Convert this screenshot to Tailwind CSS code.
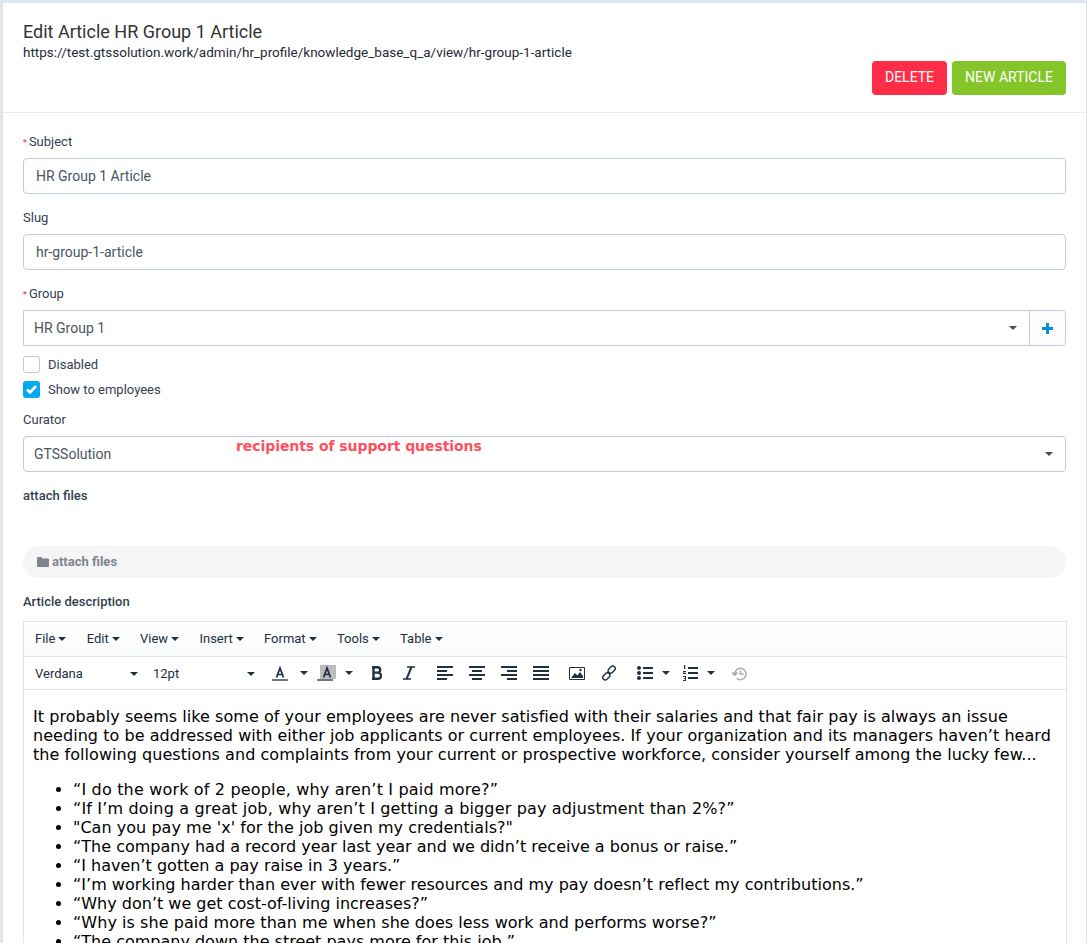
<!DOCTYPE html>
<html lang="en">
<head>
    <meta charset="UTF-8">
    <meta name="viewport" content="width=device-width, initial-scale=1.0">
    <title>Edit Article</title>
    <script src="https://cdn.jsdelivr.net/npm/@tailwindcss/browser@4"></script>
</head>
<body class="bg-[#dfe6f0] h-[943px] overflow-hidden font-['Roboto',sans-serif] text-[13px] text-[#333f50]">
    <div class="ml-[3px] mr-px mt-[3px] h-[940px] bg-white overflow-hidden">
        <!-- header -->
        <div class="h-[109px] border-b border-[#e8ecf1] box-content flex justify-between pl-5 pr-5">
            <div class="pt-[17px]">
                <h1 class="text-[18px] leading-[24px] text-[#333]">Edit Article HR Group 1 Article</h1>
                <a class="block text-[13.5px] leading-[17px] text-[#1f2a37]">https://test.gtssolution.work/admin/hr_profile/knowledge_base_q_a/view/hr-group-1-article</a>
            </div>
            <div class="flex gap-[5px] pt-[58px]">
                <button class="h-[34px] w-[75px] pb-px rounded bg-[#ff2d47] text-white text-[14px]">DELETE</button>
                <button class="h-[34px] w-[114px] pb-px rounded bg-[#84c529] text-white text-[14px]">NEW ARTICLE</button>
            </div>
        </div>

        <!-- form -->
        <div class="px-5 pt-[20px] w-[1083px]">
            <label class="block h-[18px] leading-[18px]"><span class="text-[#ff2d47] text-[9px] mr-[2px]">*</span>Subject</label>
            <div class="mt-[7px] h-[36px] w-[1043px] border border-[#bfcbd9] rounded flex items-center px-3 pt-px text-[14px] text-[#4b5563]">HR Group 1 Article</div>

            <label class="block mt-[15px] h-[18px] leading-[18px]">Slug</label>
            <div class="mt-[7px] h-[36px] w-[1043px] border border-[#bfcbd9] rounded flex items-center px-3 pt-px text-[14px] text-[#4b5563]">hr-group-1-article</div>

            <label class="block mt-[15px] h-[18px] leading-[18px]"><span class="text-[#ff2d47] text-[9px] mr-[2px]">*</span>Group</label>
            <div class="mt-[7px] h-[36px] w-[1043px] border border-[#bfcbd9] rounded-r flex items-center text-[14px] text-[#4b5563]">
                <span class="flex-1 pl-[10px] pt-px">HR Group 1</span>
                <svg class="w-[8px] h-[4px] mr-[12px] fill-[#3f4a5a]" viewBox="0 0 8 4"><path d="M0 0h8L4 4z"/></svg>
                <div class="w-[36px] h-full border-l border-[#bfcbd9] bg-[#fbfcfe] flex items-center justify-center rounded-r">
                    <svg class="w-[11px] h-[11px] fill-[#0a8fd6]" viewBox="0 0 11 11"><path d="M4 0h3v4h4v3H7v4H4V7H0V4h4z"/></svg>
                </div>
            </div>

            <div class="mt-[10px] flex items-center h-[17px] gap-[8px]">
                <span class="w-[17px] h-[17px] border border-[#bfcbd9] rounded-[3px] bg-white"></span>
                <span>Disabled</span>
            </div>
            <div class="mt-[8px] flex items-center h-[17px] gap-[8px]">
                <span class="w-[17px] h-[17px] rounded-[3px] bg-[#03a9f4] flex items-center justify-center">
                    <svg class="w-[11px] h-[9px]" viewBox="0 0 11 9" fill="none" stroke="#fff" stroke-width="2.6"><path d="M1 4.5l3 3L10 1"/></svg>
                </span>
                <span>Show to employees</span>
            </div>

            <label class="block mt-[13px] h-[18px] leading-[18px]">Curator</label>
            <div class="relative mt-[7px] h-[36px] w-[1043px] border border-[#bfcbd9] rounded flex items-center text-[14px] text-[#4b5563]">
                <span class="flex-1 pl-[10px] pt-px">GTSSolution</span>
                <svg class="w-[8px] h-[4px] mr-[12px] fill-[#3f4a5a]" viewBox="0 0 8 4"><path d="M0 0h8L4 4z"/></svg>
                <span class="absolute left-[212px] top-0 h-[18px] leading-[18px] font-['DejaVu_Sans',sans-serif] text-[14px] font-bold tracking-[-0.07px] text-[#ff4f5e] whitespace-nowrap">recipients of support questions</span>
            </div>

            <label class="block mt-[15px] h-[18px] leading-[18px] font-medium">attach files</label>
            <div class="mt-[41px] h-[32px] w-[1043px] rounded-full bg-[#f5f5f5] flex items-center pl-[14px] gap-[3px] font-bold text-[#80848c]">
                <svg class="w-[12px] h-[10px] fill-[#80848c]" viewBox="0 0 12 10"><path d="M1 0h3.5l1 1.5H11a1 1 0 0 1 1 1V9a1 1 0 0 1-1 1H1a1 1 0 0 1-1-1V1a1 1 0 0 1 1-1z"/></svg>
                <span>attach files</span>
            </div>

            <label class="block mt-[15px] h-[18px] leading-[18px] font-medium">Article description</label>

            <!-- editor -->
            <div class="mt-[10px] w-[1044px] border border-[#e2e4e7] border-b-0">
                <div class="h-[34px] flex items-center gap-[20.3px] pl-[11px] text-[#222f3e] bg-gradient-to-b from-white to-[#fafbfc]">
                    <span class="flex items-center gap-[3px]">File<svg class="w-[8px] h-[4px] fill-[#222f3e]" viewBox="0 0 8 4"><path d="M0 0h8L4 4z"/></svg></span>
                    <span class="flex items-center gap-[3px]">Edit<svg class="w-[8px] h-[4px] fill-[#222f3e]" viewBox="0 0 8 4"><path d="M0 0h8L4 4z"/></svg></span>
                    <span class="flex items-center gap-[3px]">View<svg class="w-[8px] h-[4px] fill-[#222f3e]" viewBox="0 0 8 4"><path d="M0 0h8L4 4z"/></svg></span>
                    <span class="flex items-center gap-[3px]">Insert<svg class="w-[8px] h-[4px] fill-[#222f3e]" viewBox="0 0 8 4"><path d="M0 0h8L4 4z"/></svg></span>
                    <span class="flex items-center gap-[3px]">Format<svg class="w-[8px] h-[4px] fill-[#222f3e]" viewBox="0 0 8 4"><path d="M0 0h8L4 4z"/></svg></span>
                    <span class="flex items-center gap-[3px]">Tools<svg class="w-[8px] h-[4px] fill-[#222f3e]" viewBox="0 0 8 4"><path d="M0 0h8L4 4z"/></svg></span>
                    <span class="flex items-center gap-[3px]">Table<svg class="w-[8px] h-[4px] fill-[#222f3e]" viewBox="0 0 8 4"><path d="M0 0h8L4 4z"/></svg></span>
                </div>
                <div class="h-[34px] border-y border-[#e2e4e7] flex items-center text-[#222f3e]">
                    <span class="w-[118px] pl-[11px] pt-px flex items-center justify-between pr-[4px]">Verdana<svg class="w-[8px] h-[4px] fill-[#222f3e]" viewBox="0 0 8 4"><path d="M0 0h8L4 4z"/></svg></span>
                    <span class="w-[118px] pl-[11px] pt-px flex items-center justify-between pr-[5px]">12pt<svg class="w-[8px] h-[4px] fill-[#222f3e]" viewBox="0 0 8 4"><path d="M0 0h8L4 4z"/></svg></span>
                    <svg class="ml-[12px] w-[16px] h-[16px]" viewBox="0 0 16 16"><path d="M0 14h16v2H0z" fill="#777"/><path d="M4.500 12.500L8 3l3.500 9.500M5.700 9.500h4.600" fill="none" stroke="#222f3e" stroke-width="1.700"/></svg>
                    <svg class="ml-[12px] w-[8px] h-[4px] fill-[#222f3e]" viewBox="0 0 8 4"><path d="M0 0h8L4 4z"/></svg>
                    <svg class="ml-[9px] w-[19px] h-[16px]" viewBox="0 0 19 16"><path d="M3 0h16v14H3z" fill="#bbb"/><path d="M0 14h16v2H0z" fill="#777"/><path d="M6.500 12.500L10 3l3.500 9.500M7.700 9.500h4.600" fill="none" stroke="#222f3e" stroke-width="1.700"/></svg>
                    <svg class="ml-[9px] w-[8px] h-[4px] fill-[#222f3e]" viewBox="0 0 8 4"><path d="M0 0h8L4 4z"/></svg>
                    <svg class="ml-[19px] w-[10px] h-[14px]" viewBox="0 0 10 14" fill="none" stroke="#222f3e" stroke-width="2.400"><path d="M1.500 0v14M0 1.200h5.500a2.600 2.600 0 0 1 0 5.400H1.500h4.500a3 3 0 0 1 0 6.200H0"/></svg>
                    <svg class="ml-[21px] w-[12px] h-[14px]" viewBox="0 0 12 14" fill="none" stroke="#222f3e"><path d="M4 1h8M0 13h8" stroke-width="1.400"/><path d="M8.500 1L3.500 13" stroke-width="2"/></svg>
                    <svg class="ml-[22px] w-[16px] h-[14px] fill-[#222f3e]" viewBox="0 0 16 14"><path d="M0 0h16v2H0zM0 4h10v2H0zM0 8h16v2H0zM0 12h10v2H0z"/></svg>
                    <svg class="ml-[16px] w-[16px] h-[14px] fill-[#222f3e]" viewBox="0 0 16 14"><path d="M0 0h16v2H0zM3 4h10v2H3zM0 8h16v2H0zM3 12h10v2H3z"/></svg>
                    <svg class="ml-[16px] w-[16px] h-[14px] fill-[#222f3e]" viewBox="0 0 16 14"><path d="M0 0h16v2H0zM6 4h10v2H6zM0 8h16v2H0zM6 12h10v2H6z"/></svg>
                    <svg class="ml-[16px] w-[16px] h-[14px] fill-[#222f3e]" viewBox="0 0 16 14"><path d="M0 0h16v2H0zM0 4h16v2H0zM0 8h16v2H0zM0 12h16v2H0z"/></svg>
                    <svg class="ml-[20px] w-[16px] h-[13px]" viewBox="0 0 16 13"><path d="M.5.500h15v12H.5z" fill="#fff" stroke="#222f3e"/><path d="M2 11l4-5 2.500 2.500L11 5l3 4v2z" fill="#222f3e"/><circle cx="11.500" cy="3" r="1.200" fill="#222f3e"/></svg>
                    <svg class="ml-[16px] w-[16px] h-[16px]" viewBox="0 0 16 16" fill="none" stroke="#222f3e" stroke-width="1.400"><rect x="8.200" y="0.600" width="5" height="8" rx="2.500" transform="rotate(45 10.700 4.600)"/><rect x="2.800" y="7.400" width="5" height="8" rx="2.500" transform="rotate(45 5.300 11.400)"/></svg>
                    <svg class="ml-[20px] w-[16px] h-[14px] fill-[#222f3e]" viewBox="0 0 16 14"><circle cx="2" cy="2" r="2"/><circle cx="2" cy="7" r="2"/><circle cx="2" cy="12" r="2"/><path d="M6 1h10v2H6zM6 6h10v2H6zM6 11h10v2H6z"/></svg>
                    <svg class="ml-[9px] w-[8px] h-[4px] fill-[#222f3e]" viewBox="0 0 8 4"><path d="M0 0h8L4 4z"/></svg>
                    <svg class="ml-[13px] w-[15px] h-[16px] fill-[#222f3e]" viewBox="0 0 15 16"><path d="M5 2h10v2H5zM5 7h10v2H5zM5 12h10v2H5z"/><path d="M1 0h1.200v4H1zM0 6h3v1.200H1.200V8H3v1H0V7.400h1.800V7H0zM0 11h3v5H0v-1h2v-1H.6v-.8H2V12H0z"/></svg>
                    <svg class="ml-[9px] w-[8px] h-[4px] fill-[#222f3e]" viewBox="0 0 8 4"><path d="M0 0h8L4 4z"/></svg>
                    <svg class="ml-[17px] w-[15px] h-[15px]" viewBox="0 0 16 15" fill="none" stroke="#a8acb1" stroke-width="1.600"><path d="M3 8a6 6 0 1 1 2 4.500"/><path d="M9 4v4h3.500"/><path d="M0 6.500l3 3 3-3" stroke-width="1.400" fill="#a8acb1"/></svg>
                </div>
                <div class="pt-[17px] pl-[9px] pr-[10px] font-['DejaVu_Sans',sans-serif] text-[16px] leading-[19px] text-black">
                    <p class="tracking-[0.05px]">It probably seems like some of your employees are never satisfied with their salaries and that fair pay is always an issue needing to be addressed with either job applicants or current employees. If your organization and its managers haven’t heard the following questions and complaints from your current or prospective workforce, consider yourself among the lucky few...</p>
                    <ul class="list-disc pl-[40px] mt-[16px]">
                        <li class="tracking-[0.17px]">“I do the work of 2 people, why aren’t I paid more?”</li>
                        <li class="tracking-[0.16px]">“If I’m doing a great job, why aren’t I getting a bigger pay adjustment than 2%?”</li>
                        <li class="tracking-[0.04px]">"Can you pay me 'x' for the job given my credentials?"</li>
                        <li>“The company had a record year last year and we didn’t receive a bonus or raise.”</li>
                        <li>“I haven’t gotten a pay raise in 3 years.”</li>
                        <li class="tracking-[0.02px]">“I’m working harder than ever with fewer resources and my pay doesn’t reflect my contributions.”</li>
                        <li>“Why don’t we get cost-of-living increases?”</li>
                        <li class="tracking-[0.05px]">“Why is she paid more than me when she does less work and performs worse?”</li>
                        <li>“The company down the street pays more for this job.”</li>
                    </ul>
                </div>
            </div>
        </div>
    </div>
</body>
</html>
